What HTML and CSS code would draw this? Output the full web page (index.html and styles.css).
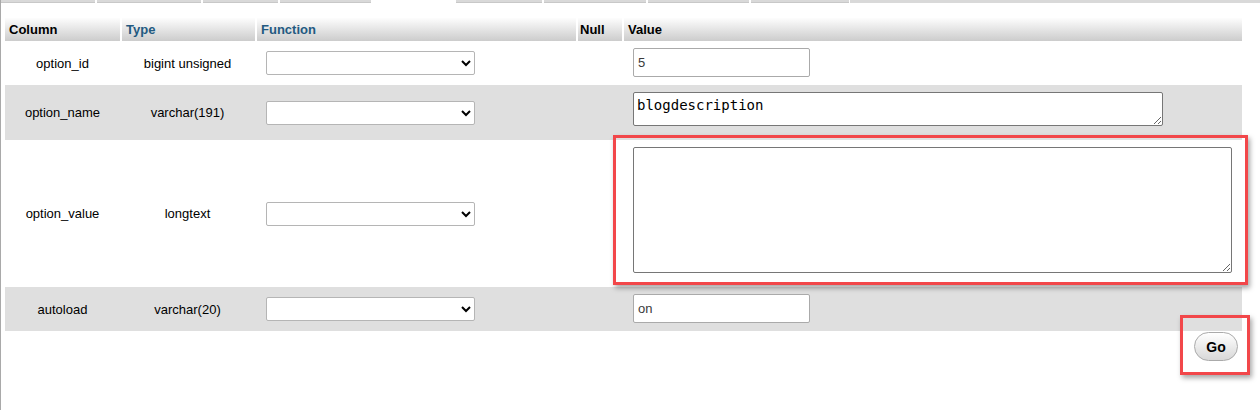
FILE: index.html
```html
<!DOCTYPE html>
<html lang="en">
<head>
    <meta charset="UTF-8">
    <meta name="viewport" content="width=device-width, initial-scale=1.0">
    <title>Insert row</title>
    <link rel="stylesheet" href="styles.css">
</head>
<body>

<div class="page">
    <!-- tab strip, only its bottom edge is visible -->
    <div class="tabs">
        <span class="tab"></span>
        <span class="tab"></span>
        <span class="tab"></span>
        <span class="tab"></span>
        <span class="tab active"></span>
        <span class="tab"></span>
        <span class="tab"></span>
        <span class="tab"></span>
        <span class="tab"></span>
        <span class="tab rest"></span>
    </div>

    <table class="insert-table">
        <thead>
            <tr>
                <th class="c-col">Column</th>
                <th class="c-type"><a href="#">Type</a></th>
                <th class="c-func"><a href="#">Function</a></th>
                <th class="c-null">Null</th>
                <th class="c-val">Value</th>
            </tr>
        </thead>
        <tbody>
            <tr>
                <td class="name">option_id</td>
                <td class="type">bigint unsigned</td>
                <td class="func"><select><option></option></select></td>
                <td class="null"></td>
                <td class="value"><input type="text" value="5"></td>
            </tr>
            <tr class="odd">
                <td class="name">option_name</td>
                <td class="type">varchar(191)</td>
                <td class="func"><select><option></option></select></td>
                <td class="null"></td>
                <td class="value"><textarea class="short">blogdescription</textarea></td>
            </tr>
            <tr>
                <td class="name">option_value</td>
                <td class="type">longtext</td>
                <td class="func"><select><option></option></select></td>
                <td class="null"></td>
                <td class="value"><textarea class="long"></textarea></td>
            </tr>
            <tr class="odd">
                <td class="name">autoload</td>
                <td class="type">varchar(20)</td>
                <td class="func"><select><option></option></select></td>
                <td class="null"></td>
                <td class="value"><input type="text" value="on"></td>
            </tr>
        </tbody>
    </table>

    <div class="footer">
        <button class="go">Go</button>
    </div>

    <!-- highlight boxes drawn over the form -->
    <div class="mark mark-value"></div>
    <div class="mark mark-go"></div>
</div>

</body>
</html>
```

FILE: styles.css
```css
body {
    margin: 0;
    font-family: "Liberation Sans", Arial, sans-serif;
    font-size: 13px;
    color: #000;
    background-color: #fff;
}
.page {
    position: relative;
    min-height: 410px;
    border-left: 1px solid #a9a9a9;
}
.tabs {
    display: flex;
    gap: 2px;
    height: 3px;
}
.tab {
    background-color: #d9d9d9;
    border-bottom: 1px solid #c8c8c8;
    box-sizing: border-box;
}
.tab:nth-child(1) { width: 94px; }
.tab:nth-child(2) { width: 104px; }
.tab:nth-child(3) { width: 75px; }
.tab:nth-child(4) { width: 91px; }
.tab:nth-child(5) { width: 81px; }
.tab:nth-child(6) { width: 86px; }
.tab:nth-child(7) { width: 102px; }
.tab:nth-child(8) { width: 101px; }
.tab:nth-child(9) { width: 98px; }
.tab.active {
    background-color: #fff;
    border-bottom: none;
}
.tab.rest {
    flex: 1;
    margin-left: -1px;
    border-bottom: none;
}
.insert-table {
    margin: 15px 0 0 4px;
    border-collapse: separate;
    border-spacing: 0;
    table-layout: fixed;
    width: 1237px;
}
th {
    box-sizing: border-box;
    height: 23px;
    padding: 0 4px;
    text-align: left;
    font-weight: bold;
    background: linear-gradient(#fdfdfd, #cccccc);
}
th + th {
    border-left: 2px solid #fff;
}
th a {
    color: #235a81;
    text-decoration: none;
}
.c-col { width: 115px; }
.c-type { width: 135px; }
.c-func { width: 321px; }
.c-null { width: 46px; padding-left: 2px; }
.c-val { width: 620px; }
td {
    padding: 0;
    vertical-align: middle;
}
tr.odd td {
    background-color: #dfdfdf;
}
td.name, td.type {
    text-align: center;
}
td.func {
    padding-left: 11px;
}
td.value {
    vertical-align: top;
    padding: 7px 0 8px 11px;
}
select {
    display: block;
    width: 209px;
    height: 24px;
    border: 1px solid #b5b5b5;
    border-radius: 2px;
    background-color: #fff;
}
input[type="text"] {
    display: block;
    box-sizing: border-box;
    width: 177px;
    height: 29px;
    padding: 0 4px;
    border: 1px solid #aaa;
    border-radius: 2px;
    font-family: "Liberation Sans", Arial, sans-serif;
    font-size: 13px;
    color: #3a3a3a;
}
textarea {
    display: block;
    box-sizing: border-box;
    margin: 0 0 6px 0;
    padding: 4px 3px 2px;
    border: 1px solid #767676;
    border-radius: 2px;
    font-family: "DejaVu Sans Mono", "Liberation Mono", monospace;
    font-size: 14px;
    color: #000;
}
textarea.short {
    width: 530px;
    height: 34px;
}
textarea.long {
    width: 599px;
    height: 126px;
}
.footer {
    width: 1237px;
    padding-top: 1px;
    text-align: right;
}
.go {
    width: 44px;
    height: 29px;
    padding: 0;
    border: 1px solid #aaa;
    border-radius: 15px;
    background: linear-gradient(#ffffff, #d8d8d8);
    font-family: "Liberation Sans", Arial, sans-serif;
    font-size: 14px;
    font-weight: bold;
    color: #000;
    cursor: pointer;
}
.mark {
    position: absolute;
    box-sizing: border-box;
    border: 3px solid #f2474a;
    box-shadow: 2px 3px 5px rgba(0, 0, 0, 0.35);
}
.mark-value {
    left: 612px;
    top: 135px;
    width: 635px;
    height: 150px;
}
.mark-go {
    left: 1179px;
    top: 315px;
    width: 70px;
    height: 60px;
}
```
